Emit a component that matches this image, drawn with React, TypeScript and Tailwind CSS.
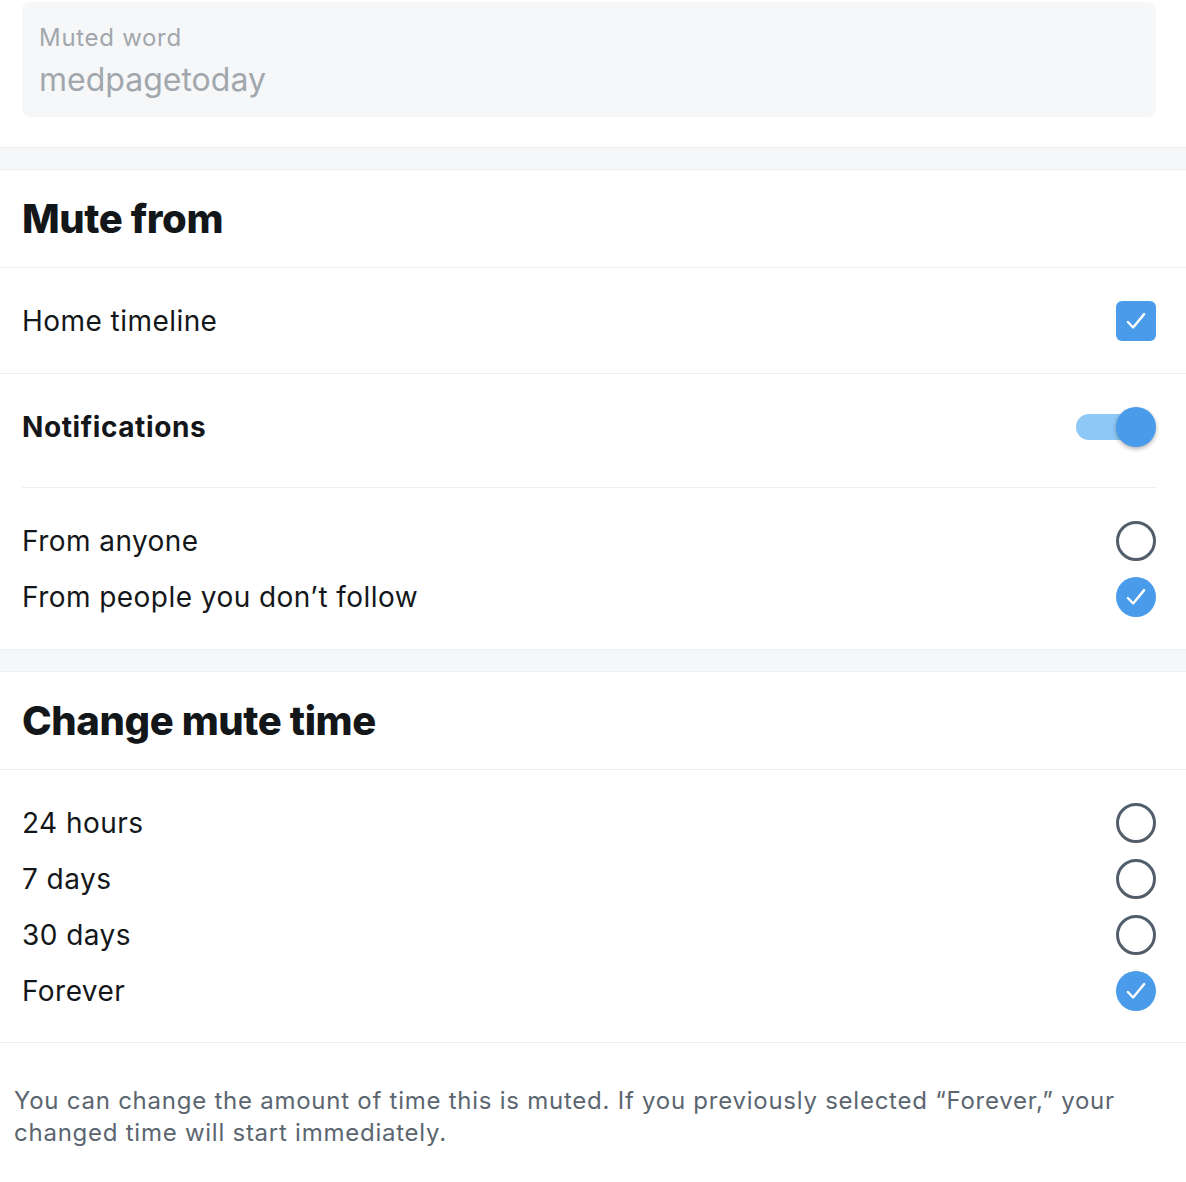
import React from "react";

const Check = () => (
  <svg viewBox="0 0 24 24" className="w-[30px] h-[30px]" fill="none">
    <path d="M5.5 12.8l4.2 4.4L18.5 6.5" stroke="white" strokeWidth="1.9" strokeLinecap="round" strokeLinejoin="round" />
  </svg>
);

const Radio = ({ checked }: { checked?: boolean }) =>
  checked ? (
    <div className="w-10 h-10 rounded-full bg-[#4a9be9] flex items-center justify-center">
      <Check />
    </div>
  ) : (
    <div className="w-10 h-10 rounded-full border-[3px] border-[#525e6a]" />
  );

const Band = () => <div className="h-[23px] bg-[#f5f7f8] border-y border-[#eceff1]" />;

const Heading = ({ children }: { children: React.ReactNode }) => (
  <div className="h-[98px] flex items-center pl-[22px] pr-[30px] border-b border-[#eceff1]">
    <h2 className="text-[40px] font-extrabold tracking-[-0.4px] text-[#14171a]">{children}</h2>
  </div>
);

const OptionRow = ({ label, checked }: { label: string; checked?: boolean }) => (
  <div className="h-14 flex items-center justify-between">
    <span className="text-[28px] tracking-[0.45px] text-[#14171a]">{label}</span>
    <Radio checked={checked} />
  </div>
);

export default function App() {
  return (
    <div className="bg-white w-[1186px] min-h-[1182px]" style={{ fontFamily: "Inter, 'Noto Sans', sans-serif" }}>
      {/* Muted word input */}
      <div className="pt-[2px] pl-[22px] pr-[30px] pb-[30px]">
        <div className="h-[115px] rounded-lg bg-[#f6f7f9] px-[17px] pt-[20px]">
          <div className="text-[24px] leading-[32px] tracking-[0.7px] text-[#a1a7ad]">Muted word</div>
          <div className="text-[32px] leading-[40px] text-[#a1a7ad] mt-[6px]">medpagetoday</div>
        </div>
      </div>

      <Band />
      <Heading>Mute from</Heading>

      <div className="h-[106px] flex items-center justify-between pl-[22px] pr-[30px] border-b border-[#eceff1]">
        <span className="text-[28px] tracking-[0.45px] text-[#14171a]">Home timeline</span>
        <div className="w-10 h-10 rounded-md bg-[#4a9be9] flex items-center justify-center">
          <Check />
        </div>
      </div>

      <div className="pl-[22px] pr-[30px]">
        <div className="h-[114px] pb-[8px] flex items-center justify-between border-b border-[#eceff1]">
          <span className="text-[28px] font-bold tracking-[0.6px] text-[#14171a]">Notifications</span>
          <div className="relative w-[80px] h-[40px] flex items-center">
            <div className="w-[64px] h-[26px] rounded-full bg-[#8ec8f6]" />
            <div className="absolute right-0 top-0 w-10 h-10 rounded-full bg-[#4a9be9] shadow-[0_2px_4px_rgba(0,0,0,0.3)]" />
          </div>
        </div>
        <div className="pt-[25px] pb-[24px]">
          <OptionRow label="From anyone" />
          <OptionRow label="From people you don’t follow" checked />
        </div>
      </div>

      <Band />
      <Heading>Change mute time</Heading>

      <div className="pl-[22px] pr-[30px] pt-[25px] pb-[23px] border-b border-[#eceff1]">
        <OptionRow label="24 hours" />
        <OptionRow label="7 days" />
        <OptionRow label="30 days" />
        <OptionRow label="Forever" checked />
      </div>

      <p className="pl-[14px] pr-[40px] pt-[42px] text-[24px] leading-[32px] tracking-[0.75px] text-[#5b6670]">
        You can change the amount of time this is muted. If you previously selected “Forever,” your changed time will
        start immediately.
      </p>
    </div>
  );
}
